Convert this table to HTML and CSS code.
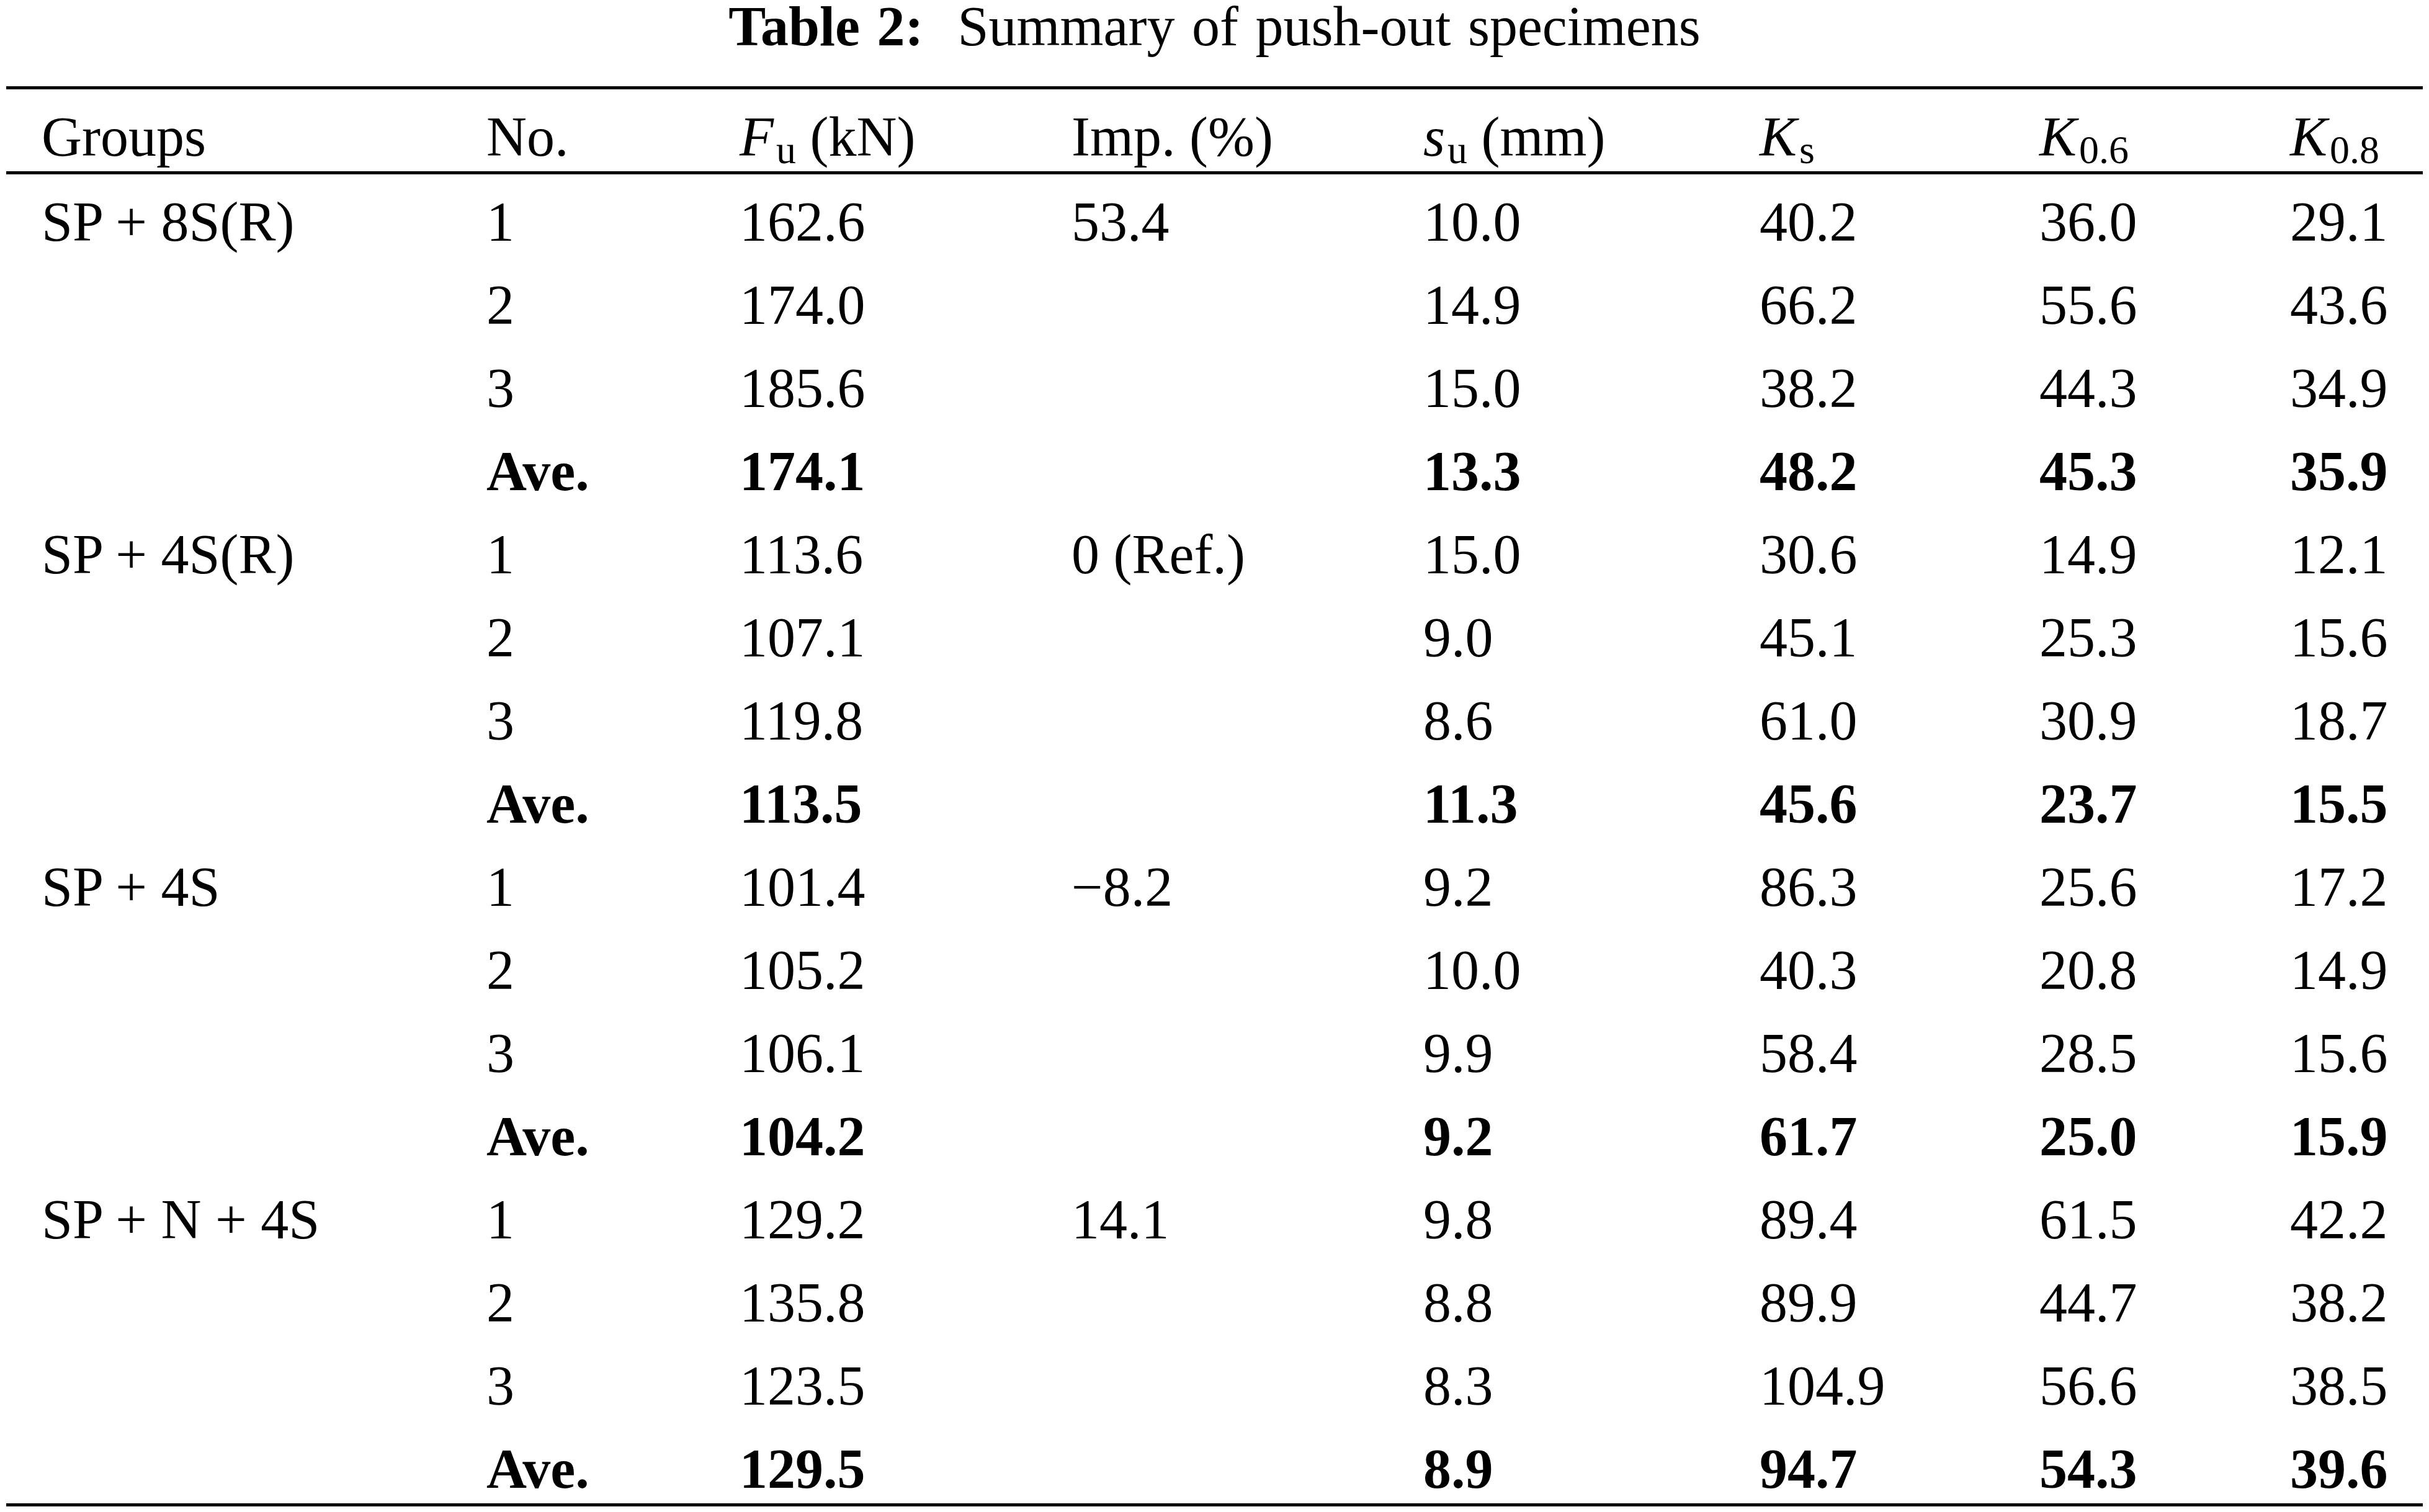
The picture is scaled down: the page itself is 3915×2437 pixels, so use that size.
FILE: index.html
```html
<!DOCTYPE html>
<html>
<head>
<meta charset="utf-8">
<title>Table 2: Summary of push-out specimens</title>
<link rel="stylesheet" href="styles.css">
</head>
<body>
<h1 class="caption"><b>Table 2:</b>&nbsp; Summary of push-out specimens</h1>
<table class="data">
  <colgroup>
    <col class="c1"><col class="c2"><col class="c3"><col class="c4"><col class="c5"><col class="c6"><col class="c7"><col class="c8">
  </colgroup>
  <thead>
    <tr>
      <th>Groups</th>
      <th>No.</th>
      <th><i>F</i><sub>u</sub> (kN)</th>
      <th>Imp. (%)</th>
      <th><i>s</i><sub>u</sub> (mm)</th>
      <th><i>K</i><sub>s</sub></th>
      <th><i>K</i><sub>0.6</sub></th>
      <th><i>K</i><sub>0.8</sub></th>
    </tr>
  </thead>
  <tbody>
    <tr class="first"><td>SP + 8S(R)</td><td>1</td><td>162.6</td><td>53.4</td><td>10.0</td><td>40.2</td><td>36.0</td><td>29.1</td></tr>
    <tr><td></td><td>2</td><td>174.0</td><td></td><td>14.9</td><td>66.2</td><td>55.6</td><td>43.6</td></tr>
    <tr><td></td><td>3</td><td>185.6</td><td></td><td>15.0</td><td>38.2</td><td>44.3</td><td>34.9</td></tr>
    <tr class="ave"><td></td><td>Ave.</td><td>174.1</td><td></td><td>13.3</td><td>48.2</td><td>45.3</td><td>35.9</td></tr>

    <tr><td>SP + 4S(R)</td><td>1</td><td>113.6</td><td>0 (Ref.)</td><td>15.0</td><td>30.6</td><td>14.9</td><td>12.1</td></tr>
    <tr><td></td><td>2</td><td>107.1</td><td></td><td>9.0</td><td>45.1</td><td>25.3</td><td>15.6</td></tr>
    <tr><td></td><td>3</td><td>119.8</td><td></td><td>8.6</td><td>61.0</td><td>30.9</td><td>18.7</td></tr>
    <tr class="ave"><td></td><td>Ave.</td><td>113.5</td><td></td><td>11.3</td><td>45.6</td><td>23.7</td><td>15.5</td></tr>

    <tr><td>SP + 4S</td><td>1</td><td>101.4</td><td>&minus;8.2</td><td>9.2</td><td>86.3</td><td>25.6</td><td>17.2</td></tr>
    <tr><td></td><td>2</td><td>105.2</td><td></td><td>10.0</td><td>40.3</td><td>20.8</td><td>14.9</td></tr>
    <tr><td></td><td>3</td><td>106.1</td><td></td><td>9.9</td><td>58.4</td><td>28.5</td><td>15.6</td></tr>
    <tr class="ave"><td></td><td>Ave.</td><td>104.2</td><td></td><td>9.2</td><td>61.7</td><td>25.0</td><td>15.9</td></tr>

    <tr><td>SP + N + 4S</td><td>1</td><td>129.2</td><td>14.1</td><td>9.8</td><td>89.4</td><td>61.5</td><td>42.2</td></tr>
    <tr><td></td><td>2</td><td>135.8</td><td></td><td>8.8</td><td>89.9</td><td>44.7</td><td>38.2</td></tr>
    <tr><td></td><td>3</td><td>123.5</td><td></td><td>8.3</td><td>104.9</td><td>56.6</td><td>38.5</td></tr>
    <tr class="ave last"><td></td><td>Ave.</td><td>129.5</td><td></td><td>8.9</td><td>94.7</td><td>54.3</td><td>39.6</td></tr>
  </tbody>
</table>
</body>
</html>
```

FILE: styles.css
```css
html, body {
  margin: 0;
  padding: 0;
  background: #ffffff;
  color: #000000;
}

body {
  font-family: "Liberation Serif", "Times New Roman", serif;
  font-size: 90px;
}

.caption {
  margin: 0;
  font-size: 90px;
  font-weight: normal;
  line-height: 86px;
  text-align: center;
  word-spacing: 5px;
}

.caption b {
  font-weight: bold;
}

.data {
  margin: 53px 0 0 10px;
  width: 3895px;
  table-layout: fixed;
  border-collapse: separate;
  border-spacing: 0;
}

.c1 { width: 717px; }
.c2 { width: 408px; }
.c3 { width: 535px; }
.c4 { width: 567px; }
.c5 { width: 542px; }
.c6 { width: 451px; }
.c7 { width: 404px; }
.c8 { width: 271px; }

.data th,
.data td {
  padding: 0 0 0 57px;
  text-align: left;
  vertical-align: top;
  white-space: nowrap;
  font-weight: normal;
}

.data th {
  border-top: 5px solid #000;
  border-bottom: 5px solid #000;
  padding-top: 23px;
  line-height: 108.8px;
  height: 108.8px;
}

.data td {
  padding-top: 14px;
  line-height: 120px;
  height: 120px;
}

.data tr.first td {
  padding-top: 17px;
}

.data tr.ave td {
  font-weight: bold;
}

.data tr.last td {
  padding-top: 19px;
  line-height: 110px;
  height: 110px;
  border-bottom: 5px solid #000;
}

.data i {
  font-style: italic;
}

.data sub {
  font-size: 0.71em;
  line-height: 0;
  vertical-align: -0.19em;
  margin-left: 4px;
}
```
